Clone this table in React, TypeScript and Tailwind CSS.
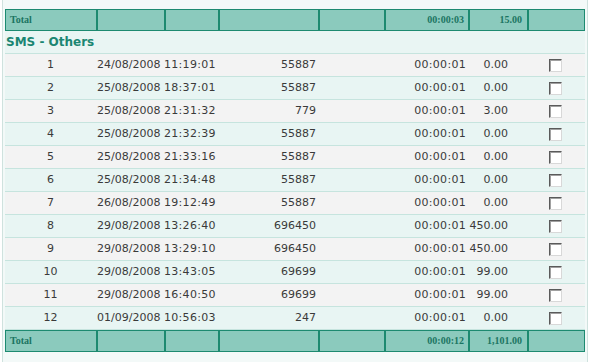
const rows = [
  ["1", "24/08/2008", "11:19:01", "55887", "00:00:01", "0.00"],
  ["2", "25/08/2008", "18:37:01", "55887", "00:00:01", "0.00"],
  ["3", "25/08/2008", "21:31:32", "779", "00:00:01", "3.00"],
  ["4", "25/08/2008", "21:32:39", "55887", "00:00:01", "0.00"],
  ["5", "25/08/2008", "21:33:16", "55887", "00:00:01", "0.00"],
  ["6", "25/08/2008", "21:34:48", "55887", "00:00:01", "0.00"],
  ["7", "26/08/2008", "19:12:49", "55887", "00:00:01", "0.00"],
  ["8", "29/08/2008", "13:26:40", "696450", "00:00:01", "450.00"],
  ["9", "29/08/2008", "13:29:10", "696450", "00:00:01", "450.00"],
  ["10", "29/08/2008", "13:43:05", "69699", "00:00:01", "99.00"],
  ["11", "29/08/2008", "16:40:50", "69699", "00:00:01", "99.00"],
  ["12", "01/09/2008", "10:56:03", "247", "00:00:01", "0.00"],
];

const TotalRow = ({ duration, cost }: { duration: string; cost: string }) => (
  <div className="flex h-[22px] bg-[#8bcabd] border border-[#1d8a70] text-[10px] font-bold text-[#1b7562] font-['Liberation_Serif',serif] leading-[20px]">
    <div className="w-[90px] pl-[4px]">Total</div>
    <div className="w-[68px] border-l-2 border-[#1d8a70]" />
    <div className="w-[54px] border-l-2 border-[#1d8a70]" />
    <div className="w-[100px] border-l-2 border-[#1d8a70]" />
    <div className="w-[66px] border-l-2 border-[#1d8a70]" />
    <div className="w-[84px] border-l-2 border-[#1d8a70] text-right pr-[4px]">{duration}</div>
    <div className="w-[59px] border-l-2 border-[#1d8a70] text-right pr-[5px]">{cost}</div>
    <div className="w-[55px] border-l-2 border-[#1d8a70]" />
  </div>
);

const Checkbox = () => (
  <div className="w-[13px] h-[13px] bg-white border border-t-[#5a5a5a] border-l-[#5a5a5a] border-r-[#d8d8d8] border-b-[#d8d8d8] shadow-[inset_1px_1px_0_#a0a0a0]" />
);

export default function App() {
  return (
    <div className="w-[595px] h-[362px] bg-white overflow-hidden font-['DejaVu_Sans',sans-serif]">
      <div className="ml-[2px] w-[586px] h-[362px] border-l border-r border-[#cfe2de] pl-[2px] pr-[2px] pt-[9px] bg-[#f3f9f8]">
        <TotalRow duration="00:00:03" cost="15.00" />
        <div className="h-[23px] bg-[#e9f5f3] border-b border-[#c6e4de] pl-[1px] text-[12px] font-bold text-[#1b8672] leading-[22px]">
          SMS - Others
        </div>
        {rows.map((r, i) => (
          <div
            key={r[0]}
            className={`flex h-[23px] border-b border-[#c6e4de] text-[11px] text-[#3a3a3a] leading-[22px] ${
              i % 2 === 0 ? "bg-[#f3f3f3]" : "bg-[#e8f5f3]"
            }`}
          >
            <div className="w-[91px] text-center">{r[0]}</div>
            <div className="w-[68px] pl-[1px] whitespace-nowrap">{r[1]}</div>
            <div className="w-[54px] tracking-[0.3px] whitespace-nowrap">{r[2]}</div>
            <div className="w-[100px] text-right pr-[2px]">{r[3]}</div>
            <div className="w-[66px]" />
            <div className="w-[84px] text-right pr-[2px] tracking-[0.3px]">{r[4]}</div>
            <div className="w-[59px] text-right pr-[19px]">{r[5]}</div>
            <div className="w-[56px] flex items-center justify-center">
              <Checkbox />
            </div>
          </div>
        ))}
        <TotalRow duration="00:00:12" cost="1,101.00" />
      </div>
    </div>
  );
}
